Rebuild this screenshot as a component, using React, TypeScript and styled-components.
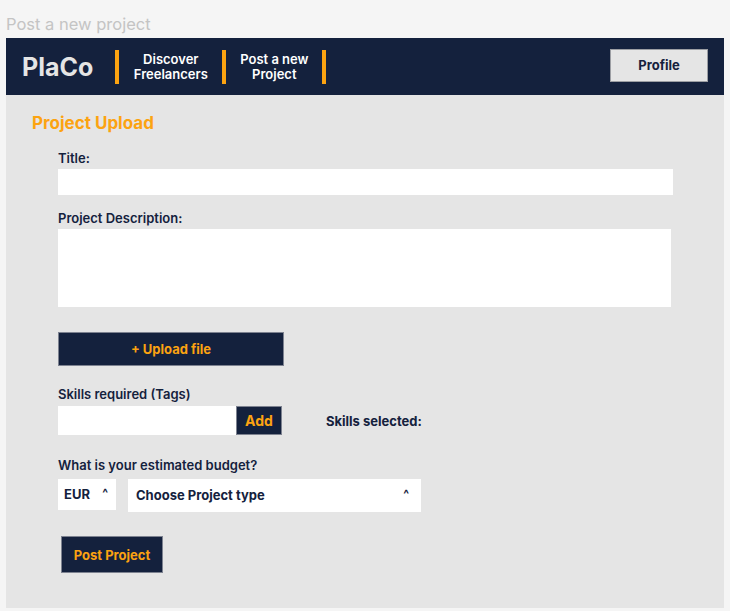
import React from "react";
import styled, { createGlobalStyle } from "styled-components";

const NAVY = "#14213D";
const ORANGE = "#FCA311";
const GRAY = "#E5E5E5";

const Global = createGlobalStyle`
  html, body { margin: 0; padding: 0; background: #f5f5f5; }
  body { font-family: Inter, "Noto Sans", sans-serif; }
  * { box-sizing: border-box; }
`;

const Page = styled.div`
  padding: 0 6px;
  height: 611px;
  display: flex;
  flex-direction: column;
`;

const PageTitle = styled.div`
  height: 38px;
  display: flex;
  align-items: center;
  font-size: 16.5px;
  color: #c4c4c4;
  padding-top: 10px;
`;

const Frame = styled.div`
  width: 718px;
  display: flex;
  flex-direction: column;
`;

const NavBar = styled.header`
  height: 57px;
  background: ${NAVY};
  display: flex;
  align-items: center;
  padding: 0 16px;
`;

const Logo = styled.div`
  font-size: 25px;
  font-weight: 700;
  color: ${GRAY};
  margin-right: 22px;
`;

const Divider = styled.div`
  width: 4px;
  height: 34px;
  background: ${ORANGE};
  flex: none;
`;

const NavLink = styled.div<{ $w: number }>`
  width: ${(p) => p.$w}px;
  text-align: center;
  font-size: 13px;
  line-height: 15px;
  font-weight: 600;
  color: #ffffff;
`;

const Spacer = styled.div`
  flex: 1;
`;

const ProfileButton = styled.button`
  width: 98px;
  height: 33px;
  background: ${GRAY};
  border: 1px solid #9c9ea3;
  font-family: inherit;
  font-size: 13px;
  font-weight: 700;
  color: ${NAVY};
  margin-top: -3px;
`;

const Panel = styled.main`
  height: 513px;
  background: ${GRAY};
  padding: 18px 0 0 26px;
  display: flex;
  flex-direction: column;
`;

const Heading = styled.h1`
  margin: 0;
  font-size: 17px;
  line-height: 20px;
  font-weight: 700;
  color: ${ORANGE};
`;

const Form = styled.div`
  display: flex;
  flex-direction: column;
  align-items: flex-start;
  padding-left: 26px;
`;

const Label = styled.label<{ $mt: number; $mb: number }>`
  display: block;
  margin-top: ${(p) => p.$mt}px;
  margin-bottom: ${(p) => p.$mb}px;
  font-size: 13px;
  line-height: 16px;
  font-weight: 600;
  color: ${NAVY};
`;

const TextInput = styled.div<{ $w: number; $h: number }>`
  width: ${(p) => p.$w}px;
  height: ${(p) => p.$h}px;
  background: #ffffff;
`;

const DarkButton = styled.button<{ $w: number; $h: number; $size?: number }>`
  width: ${(p) => p.$w}px;
  height: ${(p) => p.$h}px;
  background: ${NAVY};
  border: 1px solid #7d8290;
  color: ${ORANGE};
  font-family: inherit;
  font-size: ${(p) => p.$size ?? 13}px;
  font-weight: 700;
  padding: 0;
  flex: none;
`;

const UploadButton = styled(DarkButton)`
  margin-top: 25px;
`;

const PostButton = styled(DarkButton)`
  margin-top: 24px;
  margin-left: 3px;
`;

const SkillsRow = styled.div`
  display: flex;
  align-items: center;
`;

const SkillsSelected = styled.div`
  margin-left: 44px;
  font-size: 13px;
  font-weight: 700;
  color: ${NAVY};
`;

const SelectRow = styled.div`
  display: flex;
  align-items: flex-start;
  gap: 12px;
`;

const Select = styled.div<{ $w: number; $h: number; $pl: number; $pr: number }>`
  width: ${(p) => p.$w}px;
  height: ${(p) => p.$h}px;
  background: #ffffff;
  display: flex;
  align-items: center;
  justify-content: space-between;
  padding: 0 ${(p) => p.$pr}px 2px ${(p) => p.$pl}px;
  font-size: 13px;
  font-weight: 700;
  color: ${NAVY};
`;

const Caret = styled.span`
  font-size: 12px;
  font-weight: 700;
  margin-top: -3px;
`;

export default function App() {
  return (
    <>
      <Global />
      <Page>
        <PageTitle>Post a new project</PageTitle>
        <Frame>
          <NavBar>
            <Logo>PlaCo</Logo>
            <Divider />
            <NavLink $w={103}>
              Discover
              <br />
              Freelancers
            </NavLink>
            <Divider />
            <NavLink $w={96}>
              Post a new
              <br />
              Project
            </NavLink>
            <Divider />
            <Spacer />
            <ProfileButton>Profile</ProfileButton>
          </NavBar>
          <Panel>
            <Heading>Project Upload</Heading>
            <Form>
              <Label $mt={17} $mb={3}>Title:</Label>
              <TextInput $w={615} $h={26} />
              <Label $mt={15} $mb={3}>Project Description:</Label>
              <TextInput $w={613} $h={78} />
              <UploadButton $w={226} $h={34}>+ Upload file</UploadButton>
              <Label $mt={20} $mb={4}>Skills required (Tags)</Label>
              <SkillsRow>
                <TextInput $w={178} $h={29} />
                <DarkButton $w={46} $h={29} $size={14}>Add</DarkButton>
                <SkillsSelected>Skills selected:</SkillsSelected>
              </SkillsRow>
              <Label $mt={22} $mb={6}>What is your estimated budget?</Label>
              <SelectRow>
                <Select $w={58} $h={31} $pl={6} $pr={8}>
                  EUR<Caret>^</Caret>
                </Select>
                <Select $w={293} $h={33} $pl={8} $pr={12}>
                  Choose Project type<Caret>^</Caret>
                </Select>
              </SelectRow>
              <PostButton $w={102} $h={37}>Post Project</PostButton>
            </Form>
          </Panel>
        </Frame>
      </Page>
    </>
  );
}
